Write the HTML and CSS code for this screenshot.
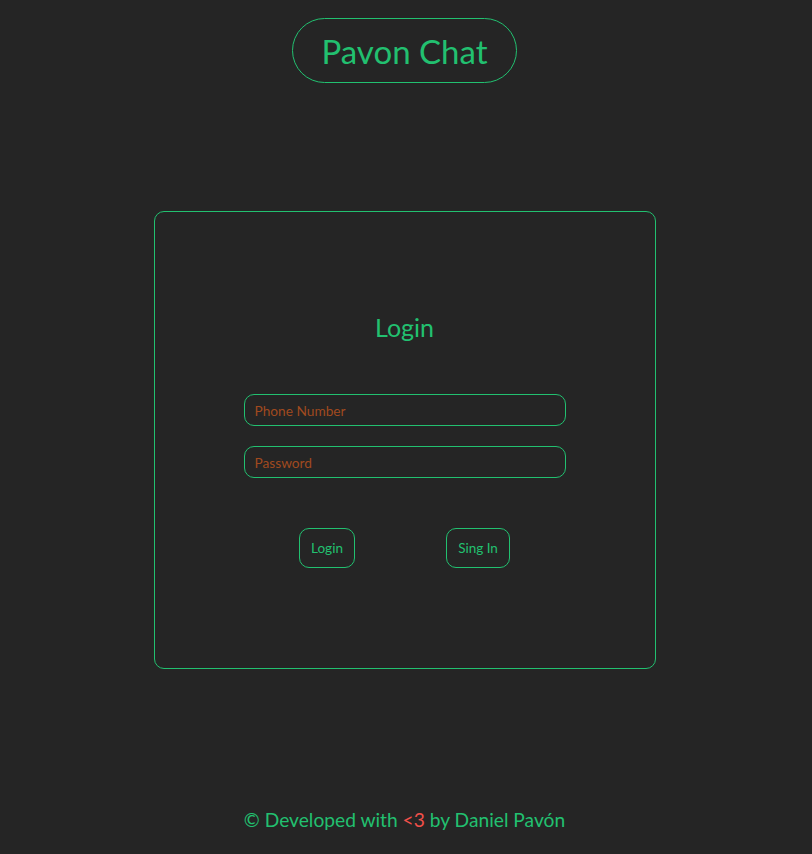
FILE: index.html
```html
<!DOCTYPE html>
<html lang="en">
<head>
<meta charset="utf-8">
<title>Pavon Chat</title>
<link rel="stylesheet" href="styles.css">
</head>
<body>
<header class="top">
  <div class="brand">Pavon Chat</div>
</header>
<main class="stage">
  <section class="card">
    <h1 class="card-title">Login</h1>
    <form class="form">
      <input class="field" type="text" placeholder="Phone Number">
      <input class="field" type="password" placeholder="Password">
      <div class="actions">
        <button type="button" class="btn btn-login">Login</button>
        <button type="button" class="btn btn-sign">Sing In</button>
      </div>
    </form>
  </section>
</main>
<footer class="foot">© Developed with <span class="heart">&lt;3</span> by Daniel Pavón</footer>
</body>
</html>
```

FILE: styles.css
```css
* { box-sizing: border-box; }
html, body { margin: 0; padding: 0; }
html { background: #252525; }
body {
  background: #252525;
  color: #22c070;
  font-family: "Lato", "Open Sans", sans-serif;
  width: 809px;
  height: 854px;
  display: flex;
  flex-direction: column;
  align-items: center;
}
.top {
  padding-top: 18px;
  display: flex;
  justify-content: center;
}
.brand {
  width: 225px;
  height: 65px;
  border: 1px solid #22c070;
  border-radius: 33px;
  display: flex;
  align-items: center;
  justify-content: center;
  font-size: 33px;
  color: #22c070;
}
.stage {
  margin-top: 128px;
  display: flex;
  justify-content: center;
}
.card {
  width: 502px;
  height: 458px;
  border: 1px solid #22c070;
  border-radius: 10px;
  display: flex;
  flex-direction: column;
  align-items: center;
  padding-top: 100px;
}
.card-title {
  margin: 0;
  font-weight: 400;
  font-size: 25px;
  line-height: 30px;
  color: #22c070;
}
.form {
  margin-top: 52px;
  width: 322px;
  display: flex;
  flex-direction: column;
  gap: 20px;
}
.field {
  width: 322px;
  height: 32px;
  background: transparent;
  border: 1px solid #22c070;
  border-radius: 10px;
  padding: 0 10px;
  font-family: inherit;
  font-size: 13.7px;
  color: #a04a1f;
  outline: none;
}
.field::placeholder { color: #a04a1f; opacity: 1; }
.actions {
  margin-top: 30px;
  display: flex;
  justify-content: center;
  gap: 91px;
}
.btn {
  height: 40px;
  background: transparent;
  border: 1px solid #22c070;
  border-radius: 10px;
  color: #22c070;
  font-family: inherit;
  font-size: 13.5px;
  padding: 0;
}
.btn-login { width: 56px; }
.btn-sign { width: 64px; }
.foot {
  margin-top: auto;
  margin-bottom: 22px;
  font-size: 19.2px;
  line-height: 24px;
  color: #22c070;
}
.heart { color: #f0504a; }
```
